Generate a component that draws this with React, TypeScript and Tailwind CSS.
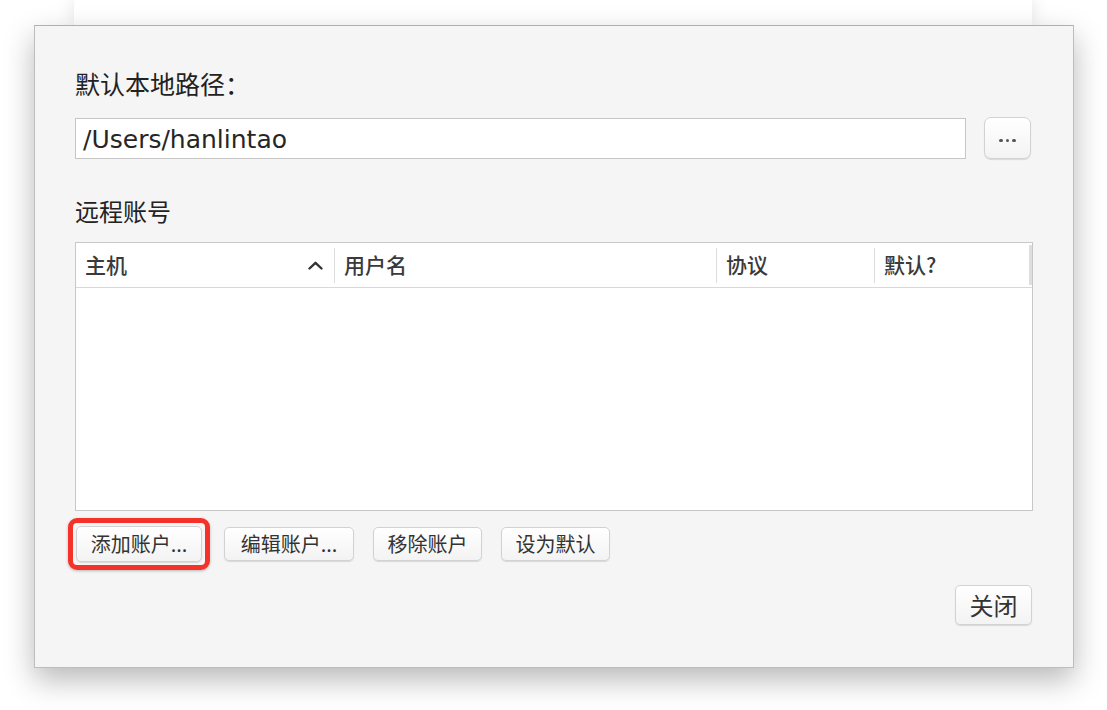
const cjk = "font-['Noto_Sans_CJK_SC','Noto_Sans',sans-serif]";

function MacButton({ children, className = "" }: { children: React.ReactNode; className?: string }) {
  return (
    <button
      className={`flex items-center justify-center rounded-[5px] border border-[#d2d2d2] bg-gradient-to-b from-white to-[#f3f3f3] text-[#333] shadow-[0_1px_1px_rgba(0,0,0,0.12)] ${className}`}
    >
      {children}
    </button>
  );
}

function HeaderCell({ label, width, chevron, last }: { label: string; width: string; chevron?: boolean; last?: boolean }) {
  return (
    <div className={`flex h-full items-center ${width}`}>
      <div className="flex flex-1 items-center justify-between pl-[9px] pr-[10px] text-[21px] font-medium text-[#3a3a3a]">
        <span>{label}</span>
        {chevron && (
          <svg width="15" height="9" viewBox="0 0 15 9" className="mr-[1px]">
            <path d="M1.5 7.5 L7.5 1.8 L13.5 7.5" fill="none" stroke="#333" strokeWidth="2.4" strokeLinecap="round" strokeLinejoin="round" />
          </svg>
        )}
      </div>
      {!last && <div className="h-[35px] w-px bg-[#dcdcdc]" />}
    </div>
  );
}

export default function App() {
  return (
    <div className={`h-[710px] w-[1107px] overflow-hidden bg-white ${cjk}`}>
      {/* parent window peeking above */}
      <div className="ml-[74px] h-[25px] w-[958px] bg-white shadow-[0_0_18px_rgba(0,0,0,0.12)]" />

      {/* sheet */}
      <div className="relative ml-[34px] flex h-[643px] w-[1040px] flex-col border border-[#bdbdbd] border-t-[#b0b0b0] bg-[#f5f5f5] px-[40px] shadow-[0_12px_28px_rgba(0,0,0,0.28)]">
        <div className="mt-[42px] h-[30px] text-[25px] leading-[30px] text-[#222]">默认本地路径：</div>

        <div className="mt-[19px] flex items-center">
          <div className="flex h-[41px] w-[891px] items-center border border-[#c6c6c6] bg-white pl-[7px] pt-[4px] font-['DejaVu_Sans',sans-serif] text-[25px] text-[#262626]">
            /Users/hanlintao
          </div>
          <MacButton className="ml-[18px] h-[42px] w-[47px] rounded-[7px]">
            <span className="mt-[5px] flex gap-[3px]">
              <span className="h-[3.5px] w-[3.5px] rounded-full bg-[#555]" />
              <span className="h-[3.5px] w-[3.5px] rounded-full bg-[#555]" />
              <span className="h-[3.5px] w-[3.5px] rounded-full bg-[#555]" />
            </span>
          </MacButton>
        </div>

        <div className="mt-[37px] h-[30px] text-[24px] leading-[30px] text-[#222]">远程账号</div>

        <div className="mt-[16px] flex h-[269px] w-[958px] flex-col border border-[#c8c8c8] bg-white">
          <div className="flex h-[45px] items-center border-b border-[#d8d8d8]">
            <HeaderCell label="主机" width="w-[259px]" chevron />
            <HeaderCell label="用户名" width="w-[382px]" />
            <HeaderCell label="协议" width="w-[158px]" />
            <HeaderCell label="默认?" width="w-[154px]" last />
            <div className="h-[40px] w-[3px] bg-[#dedede]" />
          </div>
          <div className="flex-1" />
        </div>

        <div className="mt-[7px] flex items-center">
          <div className="-ml-[7px] rounded-[9px] border-[5px] border-[#f4322a] p-[3px] shadow-[0_1px_3px_rgba(0,0,0,0.25)]">
            <MacButton className="h-[36px] w-[126px] text-[20px]">添加账户...</MacButton>
          </div>
          <MacButton className="ml-[14px] h-[34px] w-[130px] text-[20px]">编辑账户...</MacButton>
          <MacButton className="ml-[19px] h-[34px] w-[109px] text-[20px]">移除账户</MacButton>
          <MacButton className="ml-[19px] h-[34px] w-[109px] text-[20px]">设为默认</MacButton>
        </div>

        <div className="mt-[15px] flex justify-end pr-[1px]">
          <MacButton className="h-[40px] w-[77px] text-[24px]">关闭</MacButton>
        </div>
      </div>
    </div>
  );
}
